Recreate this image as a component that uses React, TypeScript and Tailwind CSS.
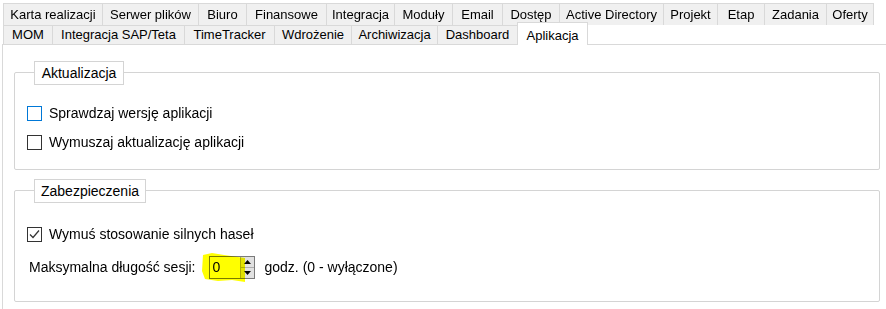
import React from 'react'

const row1 = [
  { label: 'Karta realizacji', w: 'w-[99px]' },
  { label: 'Serwer plików', w: 'w-[96px]' },
  { label: 'Biuro', w: 'w-[48px]' },
  { label: 'Finansowe', w: 'w-[80px]' },
  { label: 'Integracja', w: 'w-[68px]' },
  { label: 'Moduły', w: 'w-[58px]' },
  { label: 'Email', w: 'w-[50px]' },
  { label: 'Dostęp', w: 'w-[57px]' },
  { label: 'Active Directory', w: 'w-[104px]' },
  { label: 'Projekt', w: 'w-[54px]' },
  { label: 'Etap', w: 'w-[47px]' },
  { label: 'Zadania', w: 'w-[62px]' },
  { label: 'Oferty', w: 'w-[48px]' },
]

const row2 = [
  { label: 'MOM', w: 'w-[49px]' },
  { label: 'Integracja SAP/Teta', w: 'w-[132px]' },
  { label: 'TimeTracker', w: 'w-[90px]' },
  { label: 'Wdrożenie', w: 'w-[77px]' },
  { label: 'Archiwizacja', w: 'w-[86px]' },
  { label: 'Dashboard', w: 'w-[80px]' },
]

function Checkbox({ checked, focused }: { checked?: boolean; focused?: boolean }) {
  return (
    <div
      className={
        'w-[15px] h-[15px] border bg-white flex items-center justify-center ' +
        (focused ? 'border-[#0078d7]' : 'border-[#333333]')
      }
    >
      {checked && (
        <svg width="11" height="11" viewBox="0 0 11 11">
          <polyline points="1,5.5 4,8.5 10,1.5" fill="none" stroke="#333333" strokeWidth="1.2" />
        </svg>
      )}
    </div>
  )
}

function Group({ title, legendW, height, children }: { title: string; legendW: string; height: string; children: React.ReactNode }) {
  return (
    <div className="flex flex-col">
      <div className={'ml-[20px] h-[24px] relative z-10 bg-white border border-[#d4d4d4] flex items-center justify-center ' + legendW}>
        {title}
      </div>
      <div className={'-mt-[13px] w-[866px] border border-[#d4d4d4] rounded-[2px] ' + height}>{children}</div>
    </div>
  )
}

export default function App() {
  return (
    <div
      className="w-[886px] h-[309px] bg-white overflow-hidden text-[13px] text-black"
      style={{ fontFamily: '"Liberation Sans", Arial, sans-serif' }}
    >
      <div className="pl-[3px] pt-[3px]">
        <div className="flex h-[22px]">
          {row1.map((t, i) => (
            <div
              key={t.label}
              className={
                'h-full border-t border-l border-[#d9d9d9] bg-[#f0f0f0] flex items-center justify-center whitespace-nowrap ' +
                t.w +
                (i === row1.length - 1 ? ' border-r' : '')
              }
            >
              {t.label}
            </div>
          ))}
        </div>
        <div className="flex h-[19px] items-end relative z-10">
          {row2.map(t => (
            <div
              key={t.label}
              className={'h-[19px] border-t border-l border-[#d9d9d9] bg-[#f0f0f0] flex items-center justify-center whitespace-nowrap ' + t.w}
            >
              {t.label}
            </div>
          ))}
          <div className="w-[71px] h-[23px] -mb-px border-t border-l border-r border-[#d9d9d9] bg-white flex items-start justify-center pt-[3px]">
            Aplikacja
          </div>
        </div>
      </div>

      <div className="ml-[2px] border-t border-l border-[#d9d9d9] h-[265px] pt-[16px] pl-[11px] flex flex-col gap-[9px] text-[14px]">
        <Group title="Aktualizacja" legendW="w-[90px]" height="h-[98px]">
          <div className="pl-[12px] pt-[33px] flex flex-col gap-[14px]">
            <div className="flex items-center gap-[7px] h-[15px]">
              <Checkbox focused />
              <span>Sprawdzaj wersję aplikacji</span>
            </div>
            <div className="flex items-center gap-[7px] h-[15px]">
              <Checkbox />
              <span>Wymuszaj aktualizację aplikacji</span>
            </div>
          </div>
        </Group>

        <Group title="Zabezpieczenia" legendW="w-[112px]" height="h-[112px]">
          <div className="pl-[12px] pt-[36px] flex flex-col">
            <div className="flex items-center gap-[7px] h-[15px]">
              <Checkbox checked />
              <span>Wymuś stosowanie silnych haseł</span>
            </div>
            <div className="flex items-center mt-[14px] pl-[2px] h-[23px]">
              <span>Maksymalna długość sesji:</span>
              <div className="relative ml-[13px] w-[46px] h-[23px] border border-[#7a7a7a] bg-white flex">
                <div className="flex-1 pl-[3px] flex items-center">0</div>
                <div className="w-[14px] flex flex-col border-l border-[#adadad]">
                  <div className="flex-1 bg-[#e1e1e1] border-b border-[#adadad] flex items-center justify-center">
                    <svg width="7" height="4" viewBox="0 0 7 4">
                      <polygon points="3.5,0 7,4 0,4" fill="#000" />
                    </svg>
                  </div>
                  <div className="flex-1 bg-[#e1e1e1] flex items-center justify-center">
                    <svg width="7" height="4" viewBox="0 0 7 4">
                      <polygon points="0,0 7,0 3.5,4" fill="#000" />
                    </svg>
                  </div>
                </div>
                <svg
                  className="absolute -left-[8px] -top-[4px] mix-blend-multiply pointer-events-none"
                  width="44"
                  height="30"
                  viewBox="0 0 44 30"
                >
                  <polygon
                    points="1,2 10,0 22,2 36,4 43,5 43,29 30,27 16,28 3,26 0,18"
                    fill="#ffff00"
                  />
                </svg>
              </div>
              <span className="ml-[10px]">godz. (0 - wyłączone)</span>
            </div>
          </div>
        </Group>
      </div>
    </div>
  )
}
